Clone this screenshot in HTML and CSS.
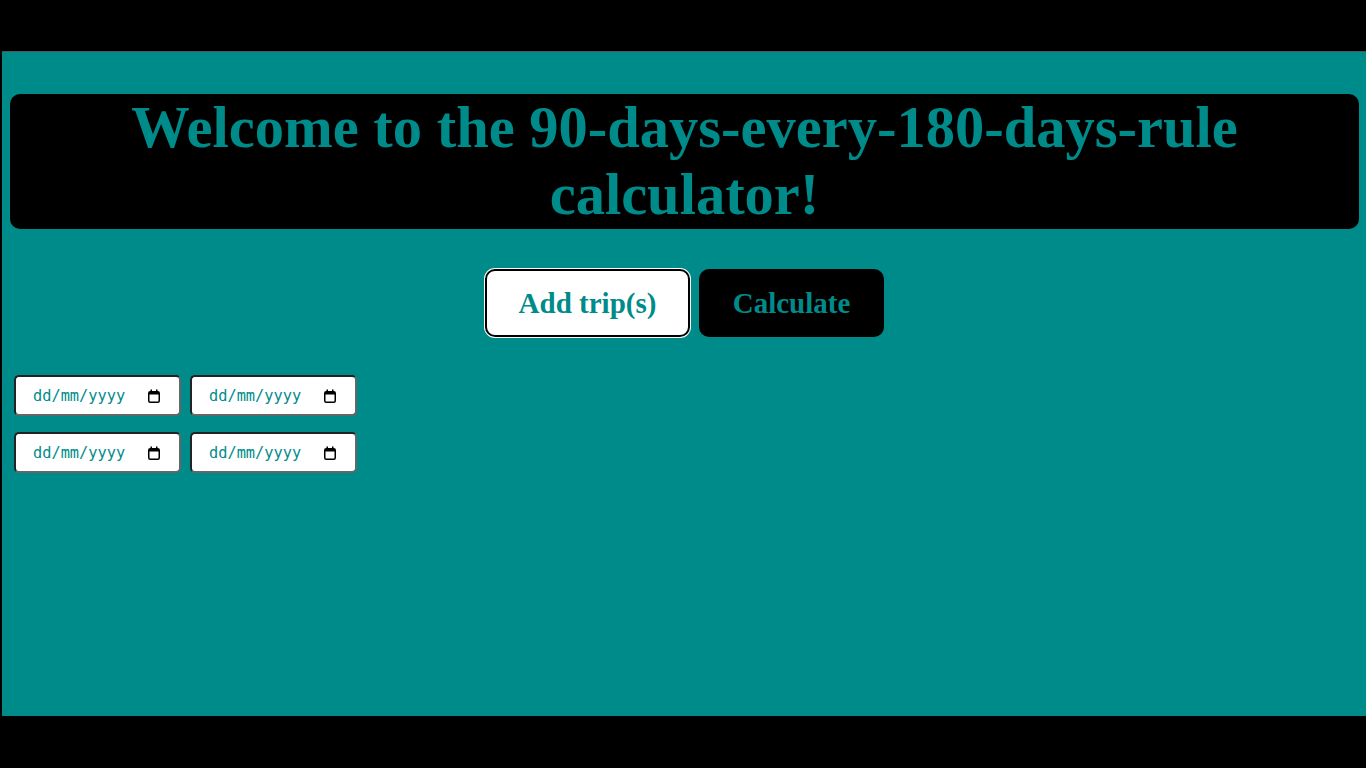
FILE: index.html
```html
<!DOCTYPE html>
<html lang="en-GB">
<head>
<meta charset="utf-8">
<link rel="stylesheet" href="styles.css">
</head>
<body>
<main class="app">
  <h1 class="title">Welcome to the 90-days-every-180-days-rule calculator!</h1>
  <div class="actions">
    <button class="btn btn-add">Add trip(s)</button>
    <button class="btn btn-calc">Calculate</button>
  </div>
  <div class="trips">
    <div class="trip">
      <label class="date"><input type="text" class="date-input" placeholder="dd/mm/yyyy"><svg class="cal" width="12" height="14" viewBox="0 0 12 14"><rect x="0.75" y="2.75" width="10.5" height="10.5" rx="1.5" fill="none" stroke="#000" stroke-width="1.5"/><rect x="1" y="3" width="10" height="2.5" fill="#000"/><rect x="2.5" y="0.5" width="1.5" height="3" fill="#000"/><rect x="8" y="0.5" width="1.5" height="3" fill="#000"/></svg></label>
      <label class="date"><input type="text" class="date-input" placeholder="dd/mm/yyyy"><svg class="cal" width="12" height="14" viewBox="0 0 12 14"><rect x="0.75" y="2.75" width="10.5" height="10.5" rx="1.5" fill="none" stroke="#000" stroke-width="1.5"/><rect x="1" y="3" width="10" height="2.5" fill="#000"/><rect x="2.5" y="0.5" width="1.5" height="3" fill="#000"/><rect x="8" y="0.5" width="1.5" height="3" fill="#000"/></svg></label>
    </div>
    <div class="trip">
      <label class="date"><input type="text" class="date-input" placeholder="dd/mm/yyyy"><svg class="cal" width="12" height="14" viewBox="0 0 12 14"><rect x="0.75" y="2.75" width="10.5" height="10.5" rx="1.5" fill="none" stroke="#000" stroke-width="1.5"/><rect x="1" y="3" width="10" height="2.5" fill="#000"/><rect x="2.5" y="0.5" width="1.5" height="3" fill="#000"/><rect x="8" y="0.5" width="1.5" height="3" fill="#000"/></svg></label>
      <label class="date"><input type="text" class="date-input" placeholder="dd/mm/yyyy"><svg class="cal" width="12" height="14" viewBox="0 0 12 14"><rect x="0.75" y="2.75" width="10.5" height="10.5" rx="1.5" fill="none" stroke="#000" stroke-width="1.5"/><rect x="1" y="3" width="10" height="2.5" fill="#000"/><rect x="2.5" y="0.5" width="1.5" height="3" fill="#000"/><rect x="8" y="0.5" width="1.5" height="3" fill="#000"/></svg></label>
    </div>
  </div>
</main>
</body>
</html>
```
FILE: styles.css
```css
html, body {
  margin: 0;
  padding: 0;
  background: #000;
  height: 100%;
}
body {
  font-family: "Liberation Serif", serif;
  padding-top: 51px;
  box-sizing: border-box;
}
.app {
  background: #008b8b;
  border-top: 1px solid #555;
  margin-left: 2px;
  height: 665px;
  padding: 42px 7px 0 8px;
  box-sizing: border-box;
}
.title {
  margin: 0;
  background: #000;
  color: #008b8b;
  border-radius: 10px;
  text-align: center;
  font-size: 58.5px;
  line-height: 67px;
  font-weight: bold;
  padding: 0 40px;
  height: 135px;
  box-sizing: border-box;
}
.actions {
  display: flex;
  justify-content: center;
  gap: 9px;
  margin-top: 40px;
}
.btn {
  font-family: "Liberation Serif", serif;
  font-weight: bold;
  font-size: 29px;
  color: #008b8b;
  height: 68px;
  border-radius: 10px;
  cursor: pointer;
}
.btn-add {
  width: 205px;
  background: #fff;
  border: 2px solid #000;
  box-shadow: 0 0 0 1px #fff;
}
.btn-calc {
  width: 185px;
  background: #000;
  border: none;
}
.trips {
  margin-top: 38px;
  padding-left: 4px;
  display: flex;
  flex-direction: column;
  gap: 16px;
}
.trip {
  display: flex;
  gap: 9px;
}
.date {
  display: flex;
  align-items: center;
  width: 167px;
  height: 41px;
  box-sizing: border-box;
  border: 2px solid #222;
  border-right-color: #666;
  border-bottom-color: #666;
  border-radius: 5px;
  background: #fff;
  padding: 0 19px 0 17px;
}
.date-input {
  flex: 1;
  min-width: 0;
  border: none;
  outline: none;
  padding: 0;
  margin: 0;
  background: transparent;
  color: #008b8b;
  font-family: "DejaVu Sans Mono", monospace;
  font-size: 15.3px;
}
.date-input::placeholder {
  color: #008b8b;
  opacity: 1;
}
.cal {
  flex: none;
  display: block;
}
```
